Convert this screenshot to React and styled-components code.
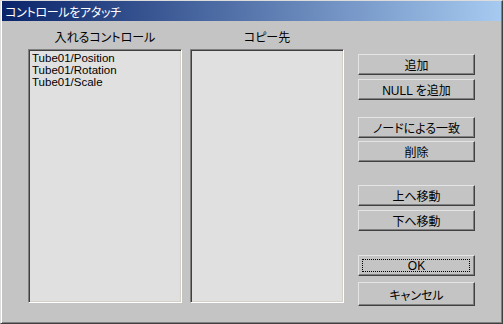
import React from 'react'
import styled, { createGlobalStyle } from 'styled-components'

const sources = ['Tube01/Position', 'Tube01/Rotation', 'Tube01/Scale']

const buttons = [
    { label: '追加', top: 23 },
    { label: 'NULL を追加', top: 4 },
    { label: 'ノードによる一致', top: 17 },
    { label: '削除', top: 3 },
    { label: '上へ移動', top: 23 },
    { label: '下へ移動', top: 4 },
    { label: 'OK', top: 24, focus: true },
    { label: 'キャンセル', top: 6, h: 24 },
]

const App = () => {
    return (
        <>
            <GlobalStyle />
            <Window>
                <TitleBar>コントロールをアタッチ</TitleBar>
                <Body>
                    <Column>
                        <Label>入れるコントロール</Label>
                        <ListBox>
                            {sources.map(item => (
                                <ListItem key={item}>{item}</ListItem>
                            ))}
                        </ListBox>
                    </Column>
                    <Column>
                        <Label>コピー先</Label>
                        <ListBox />
                    </Column>
                    <ButtonColumn>
                        {buttons.map(b => (
                            <Button key={b.label} $top={b.top} $h={b.h} $focus={b.focus}>
                                {b.label}
                            </Button>
                        ))}
                    </ButtonColumn>
                </Body>
            </Window>
        </>
    )
}

export default App


// # Styled-components
const GlobalStyle = createGlobalStyle`
    html, body {
        margin: 0;
        padding: 0;
        background: #c4c4c4;
    }
    * {
        box-sizing: border-box;
    }
`

const Window = styled.div`
    width: 503px;
    height: 324px;
    display: flex;
    flex-direction: column;
    padding: 0 1px 1px 1px;
    background: #c4c4c4;
    border-style: solid;
    border-width: 1px;
    border-color: #dcdcdc #404040 #404040 #dcdcdc;
    box-shadow: inset 1px 0 #ffffff, inset -1px -1px #808080;
    font-family: "Liberation Sans", "Noto Sans CJK JP", sans-serif;
    color: #000;
`

const TitleBar = styled.div`
    height: 20px;
    display: flex;
    align-items: center;
    padding-left: 3px;
    background: linear-gradient(to right, #0a246a, #a6caf0);
    color: #fff;
    font-size: 12px;
    font-feature-settings: "palt";
    letter-spacing: -0.3px;
`

const Body = styled.div`
    flex: 1;
    display: flex;
    padding: 10px 0 0 26px;
`

const Column = styled.div`
    width: 154px;
    display: flex;
    flex-direction: column;
    margin-right: 8px;
`

const Label = styled.div`
    height: 14px;
    line-height: 14px;
    margin-bottom: 4px;
    text-align: center;
    font-size: 12px;
    font-feature-settings: "palt";
`

const ListBox = styled.div`
    height: 254px;
    padding: 2px 3px;
    background: #e0e0e0;
    border-style: solid;
    border-width: 1px;
    border-color: #808080 #ffffff #ffffff #808080;
    box-shadow: inset 1px 1px #404040, inset -1px -1px #d4d0c8;
`

const ListItem = styled.div`
    font-size: 11.5px;
    line-height: 12px;
    white-space: nowrap;
`

const ButtonColumn = styled.div`
    display: flex;
    flex-direction: column;
    margin-left: 6px;
    width: 117px;
`

const Button = styled.div`
    position: relative;
    height: ${p => p.$h || 21}px;
    margin-top: ${p => p.$top}px;
    display: flex;
    align-items: center;
    justify-content: center;
    font-size: 12px;
    font-feature-settings: "palt";
    background: #c4c4c4;
    border-style: solid;
    border-width: 1px;
    border-color: #e4e4e4 #404040 #404040 #e4e4e4;
    box-shadow: inset -1px -1px #808080;

    &::after {
        content: '';
        display: ${p => (p.$focus ? 'block' : 'none')};
        position: absolute;
        inset: 3px 4px 3px 3px;
        border: 1px dotted #000;
    }
`
